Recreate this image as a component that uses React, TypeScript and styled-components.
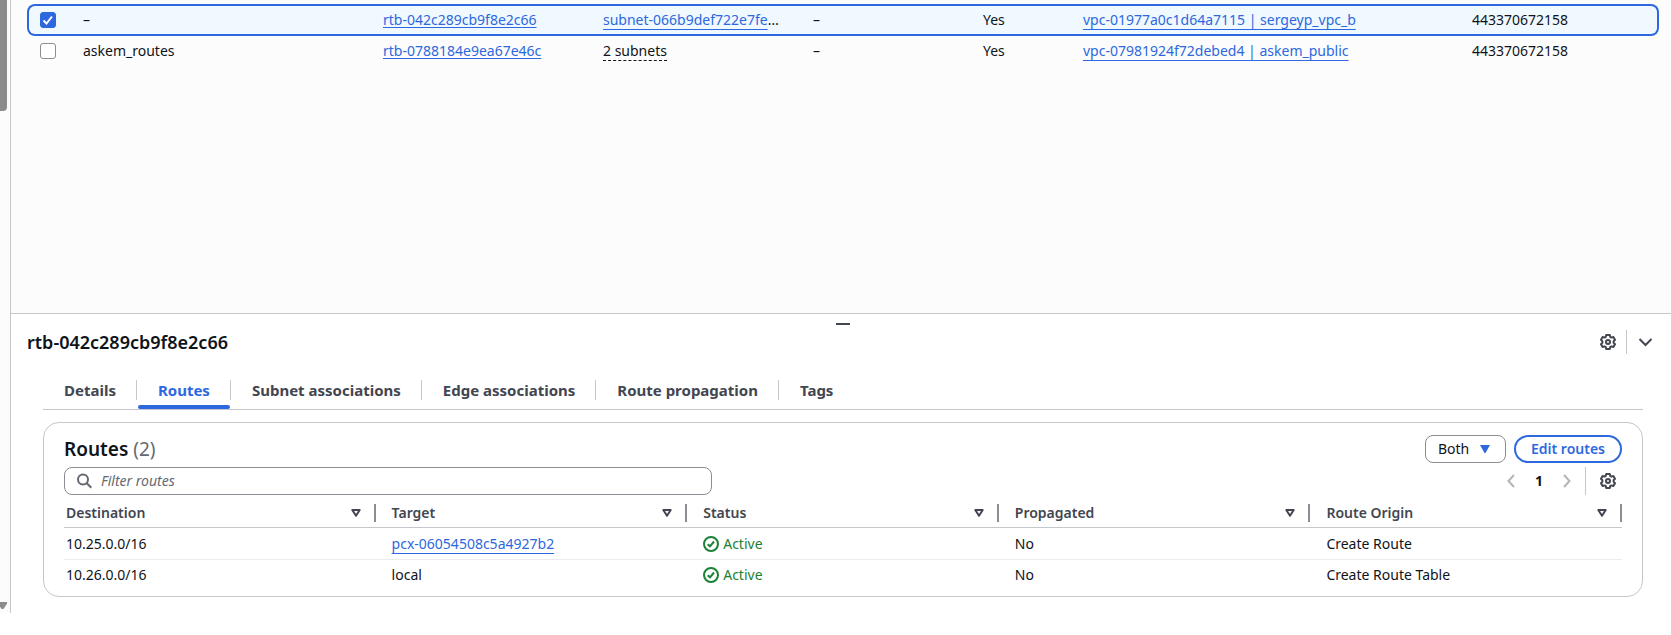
import React from "react";
import styled, { createGlobalStyle, css } from "styled-components";

const blue = "#2d68de";
const ink = "#0f141a";
const slate = "#424650";
const line = "#c6c6cd";
const control = "#8c8c94";
const green = "#1c8035";
const fontStack = '"Noto Sans", "Open Sans", sans-serif';

const GlobalStyle = createGlobalStyle`
  *, *::before, *::after { box-sizing: border-box; }
  body {
    margin: 0;
    background: #ffffff;
    color: ${ink};
    font-family: ${fontStack};
    font-size: 14px;
    line-height: 20px;
  }
  button, input, select { font: inherit; color: inherit; margin: 0; }
  svg { display: block; }
`;

const Shell = styled.div`
  display: flex;
  min-height: calc(100vh - 22px);
`;

const NavEdge = styled.aside`
  flex: none;
  display: flex;
  flex-direction: column;
  justify-content: space-between;
  width: 11px;
  padding-bottom: 4px;
  background: #fcfcfc;
  border-right: 1px solid ${line};
`;

const ScrollThumb = styled.div`
  width: 7px;
  height: 111px;
  background: #8b8b8b;
  border-radius: 0 0 4px 0;
`;

const Content = styled.div`
  flex: 1;
  min-width: 0;
  display: flex;
  flex-direction: column;
`;

const ListPane = styled.main`
  flex: 1;
  padding: 4px 12px 0 16px;
  background: #fcfcfc;
`;

const ListTable = styled.table`
  width: 100%;
  table-layout: fixed;
  border-collapse: separate;
  border-spacing: 0;
`;

const ListRow = styled.tr<{ $selected?: boolean }>`
  td {
    height: 32px;
    padding: 0 16px;
    white-space: nowrap;
    border: 0 solid transparent;
    border-width: 2px 0;
  }
  td:first-child {
    padding: 0 0 0 11px;
    border-left-width: 2px;
  }
  td:last-child {
    border-right-width: 2px;
  }
  ${(p) =>
    p.$selected
      ? css`
          td {
            background: #f0f9ff;
            border-color: ${blue};
          }
          td:first-child {
            border-radius: 8px 0 0 8px;
          }
          td:last-child {
            border-radius: 0 8px 8px 0;
          }
        `
      : css`
          td {
            border-top-width: 0;
          }
        `}
`;

const Check = styled.input`
  appearance: none;
  display: block;
  width: 16px;
  height: 16px;
  margin: 0;
  border: 1px solid ${control};
  border-radius: 3px;
  background: #ffffff;
  &:checked {
    border-color: ${blue};
    background: ${blue};
  }
`;

const CheckBox = styled.label`
  display: grid;
  width: 16px;
  > * {
    grid-area: 1 / 1;
  }
  svg {
    pointer-events: none;
  }
`;

const Link = styled.a<{ $low?: boolean }>`
  color: ${blue};
  text-decoration: underline;
  text-decoration-thickness: 1px;
  text-underline-offset: ${(p) => (p.$low ? 4 : 2)}px;
  text-decoration-skip-ink: none;
`;

const Popover = styled.button`
  padding: 0;
  border: 0;
  border-bottom: 1px dashed ${ink};
  background: none;
  line-height: 18px;
`;

const SplitPanel = styled.section`
  border-top: 1px solid ${line};
  background: #ffffff;
  padding: 9px 12px 16px 16px;
`;

const DragHandle = styled.button`
  display: block;
  width: 14px;
  height: 2px;
  margin: 0 auto;
  padding: 0;
  border: 0;
  background: ${slate};
`;

const PanelHeader = styled.header`
  display: flex;
  align-items: center;
  justify-content: space-between;
  margin-top: 5px;
  height: 24px;
`;

const PanelTitle = styled.h2`
  margin: 0;
  font-size: 18px;
  line-height: 24px;
  font-weight: 600;
`;

const Actions = styled.div<{ $inset?: boolean }>`
  display: flex;
  align-items: center;
  padding-right: ${(p) => (p.$inset ? 6 : 0)}px;
`;

const IconButton = styled.button<{ $faint?: boolean }>`
  display: flex;
  align-items: center;
  justify-content: center;
  padding: 0;
  border: 0;
  background: none;
  color: ${(p) => (p.$faint ? "#b4b4bb" : slate)};
`;

const Rule = styled.span<{ $tall?: boolean }>`
  width: 1px;
  height: ${(p) => (p.$tall ? 28 : 24)}px;
  margin: ${(p) => (p.$tall ? "0 14px" : "0 10px")};
  background: ${line};
`;

const PanelBody = styled.div`
  padding: 0 16px;
`;

const Tabs = styled.div`
  display: flex;
  margin-top: 18px;
  border-bottom: 1px solid ${line};
`;

const Tab = styled.button<{ $active?: boolean }>`
  display: flex;
  flex-direction: column;
  padding: 8px 0 0;
  border: 0;
  background: none;
  font-size: 15px;
  font-weight: 700;
  color: ${(p) => (p.$active ? blue : slate)};
  &::after {
    content: "";
    align-self: stretch;
    height: 4px;
    margin: 5px 1px 0;
    border-radius: 2px;
    background: ${(p) => (p.$active ? blue : "transparent")};
  }
`;

const TabLabel = styled.span`
  padding: 0 20px 0 21px;
  border-right: 1px solid ${line};
  line-height: 20px;
  ${Tab}:last-child & {
    border-right: 0;
  }
`;

const Card = styled.section`
  margin-top: 12px;
  padding: 12px 20px 6px;
  border: 1px solid ${line};
  border-radius: 16px;
`;

const CardRow = styled.div`
  display: flex;
  align-items: center;
  justify-content: space-between;
  margin-bottom: 4px;
`;

const CardTitle = styled.h3`
  margin: 0;
  font-size: 19px;
  line-height: 24px;
  font-weight: 600;
  span {
    color: #656871;
    font-weight: 400;
  }
`;

const SelectBox = styled.label`
  display: grid;
  align-items: center;
  margin-right: 8px;
  > * {
    grid-area: 1 / 1;
  }
  svg {
    justify-self: end;
    margin-right: 16px;
    pointer-events: none;
  }
`;

const Select = styled.select`
  appearance: none;
  width: 81px;
  height: 28px;
  padding: 0 12px;
  border: 1px solid ${control};
  border-radius: 8px;
  background: #ffffff;
`;

const EditButton = styled.button`
  width: 108px;
  height: 28px;
  padding: 0;
  border: 2px solid ${blue};
  border-radius: 14px;
  background: #ffffff;
  color: ${blue};
  font-weight: 600;
  white-space: nowrap;
`;

const Search = styled.label`
  display: flex;
  align-items: center;
  gap: 8px;
  width: 648px;
  max-width: 60%;
  height: 28px;
  padding: 0 12px;
  border: 1px solid ${control};
  border-radius: 8px;
  color: #656871;
  input {
    flex: 1;
    min-width: 0;
    padding: 0;
    border: 0;
    outline: 0;
    background: none;
  }
  input::placeholder {
    color: #656871;
    opacity: 1;
    font-style: italic;
  }
`;

const PageNumber = styled.button`
  width: 48px;
  padding: 0;
  border: 0;
  background: none;
  font-weight: 700;
`;

const RoutesTable = styled.table`
  width: 100%;
  table-layout: fixed;
  border-collapse: separate;
  border-spacing: 0;
  th {
    height: 29px;
    padding: 0 0 0 16px;
    border-bottom: 1px solid ${line};
    color: ${slate};
    font-weight: 600;
    text-align: left;
  }
  td {
    height: 30px;
    padding: 0 0 0 16px;
  }
  th:first-child,
  td:first-child {
    padding-left: 2px;
  }
  tbody tr:not(:last-child) td {
    height: 32px;
    border-bottom: 1px solid #ebebf0;
  }
`;

const HeadCell = styled.div`
  display: flex;
  align-items: center;
  justify-content: space-between;
  height: 18px;
  padding-right: 13px;
  border-right: 2px solid ${control};
`;

const Status = styled.span`
  display: flex;
  align-items: center;
  gap: 4px;
  color: ${green};
`;

const GearIcon = () => (
  <svg width="16" height="16" viewBox="0 0 16 16" fill="none" stroke="currentColor" strokeWidth="2" strokeLinejoin="round">
    <path d="M6.200 1h3.600l.5 2 1.100.6 2-.6 1.600 2.700L13.600 7.200v1.600l1.400 1.500-1.600 2.700-2-.6-1.100.6-.5 2H6.200l-.5-2-1.100-.6-2 .6L1 10.300 2.400 8.800V7.200L1 5.700 2.600 3l2 .6L5.700 3z" />
    <circle cx="8" cy="8" r="2" />
  </svg>
);

const Chevron = ({ d, w, h }: { d: string; w: number; h: number }) => (
  <svg width={w} height={h} viewBox={`0 0 ${w} ${h}`} fill="none" stroke="currentColor" strokeWidth="2">
    <path d={d} />
  </svg>
);

const SortIcon = () => (
  <svg width="10" height="8" viewBox="0 0 10 8" fill="none" stroke={slate} strokeWidth="2" strokeLinejoin="round">
    <path d="M1.300 1h7.400L5 6.800z" />
  </svg>
);

const StatusIcon = () => (
  <svg width="16" height="16" viewBox="0 0 16 16" fill="none" stroke="currentColor" strokeWidth="2">
    <circle cx="8" cy="8" r="7" />
    <path d="M4.700 8.200 7 10.300 11 5.500" />
  </svg>
);

const tabs = ["Details", "Routes", "Subnet associations", "Edge associations", "Route propagation", "Tags"];
const columns = ["Destination", "Target", "Status", "Propagated", "Route Origin"];
const listWidths = [40, 300, 220, 210, 170, 100, 389, 203];

const routes = [
  { destination: "10.25.0.0/16", target: "pcx-06054508c5a4927b2", linked: true, origin: "Create Route" },
  { destination: "10.26.0.0/16", target: "local", linked: false, origin: "Create Route Table" },
];

export default function App() {
  return (
    <>
      <GlobalStyle />
      <Shell>
        <NavEdge>
          <ScrollThumb />
          <svg width="7" height="7" viewBox="0 0 7 7" fill="#8b8b8b">
            <path d="M0 0h7v1.500L3.500 7H1.500L0 4.500z" />
          </svg>
        </NavEdge>
        <Content>
          <ListPane>
            <ListTable>
              <colgroup>
                {listWidths.map((w, i) => (
                  <col key={i} width={w} />
                ))}
              </colgroup>
              <tbody>
                <ListRow $selected>
                  <td>
                    <CheckBox>
                      <Check type="checkbox" defaultChecked aria-label="Select rtb-042c289cb9f8e2c66" />
                      <svg width="16" height="16" viewBox="0 0 16 16" fill="none" stroke="#ffffff" strokeWidth="2">
                        <path d="M3.500 8.500 6.500 11.500 12 4.500" />
                      </svg>
                    </CheckBox>
                  </td>
                  <td>–</td>
                  <td><Link href="#rtb-042c289cb9f8e2c66">rtb-042c289cb9f8e2c66</Link></td>
                  <td><Link $low href="#subnet">subnet-066b9def722e7fe</Link>…</td>
                  <td>–</td>
                  <td>Yes</td>
                  <td><Link $low href="#vpc-01977a0c1d64a7115">vpc-01977a0c1d64a7115 | sergeyp_vpc_b</Link></td>
                  <td>443370672158</td>
                </ListRow>
                <ListRow>
                  <td>
                    <CheckBox>
                      <Check type="checkbox" aria-label="Select askem_routes" />
                    </CheckBox>
                  </td>
                  <td>askem_routes</td>
                  <td><Link href="#rtb-0788184e9ea67e46c">rtb-0788184e9ea67e46c</Link></td>
                  <td><Popover type="button">2 subnets</Popover></td>
                  <td>–</td>
                  <td>Yes</td>
                  <td><Link $low href="#vpc-07981924f72debed4">vpc-07981924f72debed4 | askem_public</Link></td>
                  <td>443370672158</td>
                </ListRow>
              </tbody>
            </ListTable>
          </ListPane>

          <SplitPanel>
            <DragHandle type="button" aria-label="Resize panel" />
            <PanelHeader>
              <PanelTitle>rtb-042c289cb9f8e2c66</PanelTitle>
              <Actions>
                <IconButton type="button" aria-label="Panel preferences"><GearIcon /></IconButton>
                <Rule />
                <IconButton type="button" aria-label="Close panel">
                  <Chevron w={22} h={10} d="M2.500 2 8.500 8 14.500 2" />
                </IconButton>
              </Actions>
            </PanelHeader>
            <PanelBody>
              <Tabs role="tablist">
                {tabs.map((t) => (
                  <Tab key={t} type="button" role="tab" aria-selected={t === "Routes"} $active={t === "Routes"}>
                    <TabLabel>{t}</TabLabel>
                  </Tab>
                ))}
              </Tabs>
              <Card>
                <CardRow>
                  <CardTitle>Routes <span>(2)</span></CardTitle>
                  <Actions>
                    <SelectBox>
                      <Select aria-label="Route filter" defaultValue="Both">
                        <option>Both</option>
                      </Select>
                      <svg width="10" height="8" viewBox="0 0 10 8" fill={blue}>
                        <path d="M0 0h10L5.500 8h-1z" />
                      </svg>
                    </SelectBox>
                    <EditButton type="button">Edit routes</EditButton>
                  </Actions>
                </CardRow>
                <CardRow>
                  <Search>
                    <svg width="16" height="16" viewBox="0 0 16 16" fill="none" stroke="currentColor" strokeWidth="2">
                      <circle cx="6" cy="6.500" r="5" />
                      <path d="m9.500 10 4.800 4.800" />
                    </svg>
                    <input type="text" placeholder="Filter routes" aria-label="Filter routes" />
                  </Search>
                  <Actions $inset>
                    <IconButton type="button" $faint aria-label="Previous page">
                      <Chevron w={8} h={14} d="M7 1 1.500 7 7 13" />
                    </IconButton>
                    <PageNumber type="button">1</PageNumber>
                    <IconButton type="button" $faint aria-label="Next page">
                      <Chevron w={8} h={14} d="M1 1 6.500 7 1 13" />
                    </IconButton>
                    <Rule $tall />
                    <IconButton type="button" aria-label="Table preferences"><GearIcon /></IconButton>
                  </Actions>
                </CardRow>
                <RoutesTable>
                  <thead>
                    <tr>
                      {columns.map((c) => (
                        <th key={c}>
                          <HeadCell>{c}<SortIcon /></HeadCell>
                        </th>
                      ))}
                    </tr>
                  </thead>
                  <tbody>
                    {routes.map((r) => (
                      <tr key={r.destination}>
                        <td>{r.destination}</td>
                        <td>{r.linked ? <Link $low href="#pcx">{r.target}</Link> : r.target}</td>
                        <td><Status><StatusIcon />Active</Status></td>
                        <td>No</td>
                        <td>{r.origin}</td>
                      </tr>
                    ))}
                  </tbody>
                </RoutesTable>
              </Card>
            </PanelBody>
          </SplitPanel>
        </Content>
      </Shell>
    </>
  );
}
